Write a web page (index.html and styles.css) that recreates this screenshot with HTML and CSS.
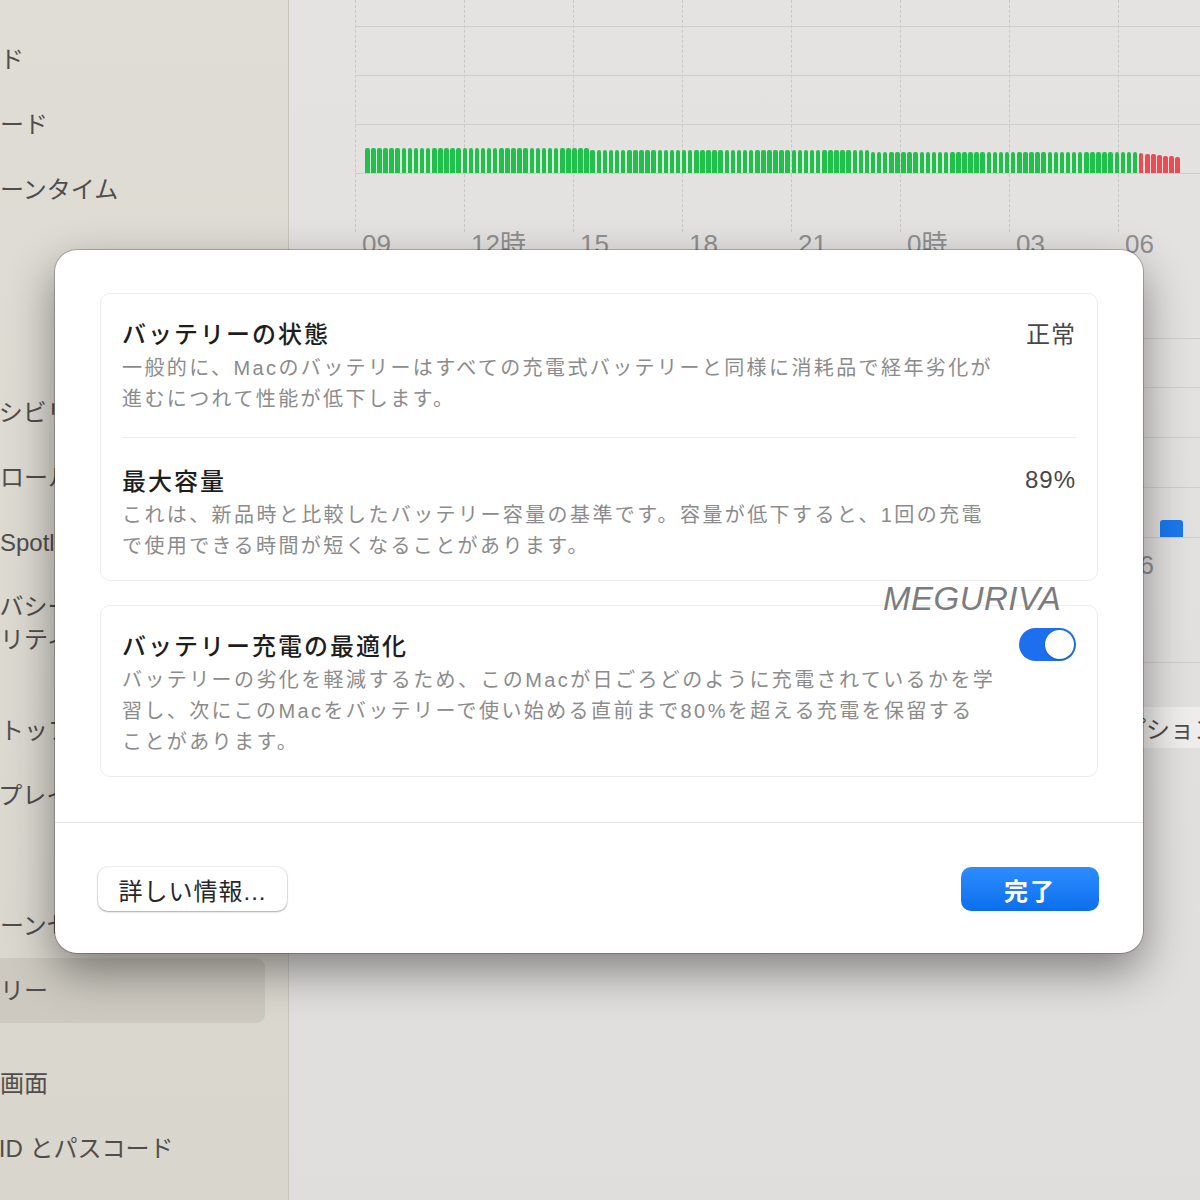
FILE: index.html
```html
<!DOCTYPE html>
<html lang="ja">
<head>
    <meta charset="UTF-8">
    <meta name="viewport" content="width=device-width, initial-scale=1.0">
    <title>バッテリー</title>
    <link rel="stylesheet" href="styles.css">
</head>
<body>
    <div class="window">
        <div class="sidebar">
            <ul class="nav">
                <li>サウンド</li>
                <li>集中モード</li>
                <li>スクリーンタイム</li>
                <li class="gap">一般</li>
                <li>外観</li>
                <li>アクセシビリティ</li>
                <li>コントロールセンター</li>
                <li>Siri と Spotlight</li>
                <li class="two">プライバシーと<br>セキュリティ</li>
                <li class="gap">デスクトップとDock</li>
                <li>ディスプレイ</li>
                <li>壁紙</li>
                <li>スクリーンセーバ</li>
                <li class="active">バッテリー</li>
                <li class="gap">ロック画面</li>
                <li>Touch ID とパスコード</li>
            </ul>
        </div>

        <div class="main">
            <div class="plot">
                <div class="grid">
                    <span></span><span></span><span></span><span></span><span></span>
                    <span></span><span></span><span></span><span></span>
                </div>
                <div class="chart level">
                    <div class="bars" id="level"></div>
                </div>
                <div class="axis">
                    <span>09</span><span>12時</span><span>15</span><span>18</span>
                    <span>21</span><span>0時</span><span>03</span><span>06</span>
                </div>
            </div>

            <div class="plot usage-plot">
                <div class="chart usage">
                    <div class="bars usage-bars">
                        <i class="use" style="margin-left: 795px; height: 17px"></i>
                    </div>
                </div>
                <div class="axis axis-small">
                    <span>09</span><span>12時</span><span>15</span><span>18</span>
                    <span>21</span><span>0時</span><span>03</span><span>06</span>
                </div>
            </div>

            <div class="divider"></div>
            <div class="actions">
                <button class="btn-opt">オプション...</button>
            </div>
        </div>

        <div class="sheet">
            <div class="sheet-body">
                <div class="box">
                    <div class="row">
                        <div class="row-head">
                            <span class="title">バッテリーの状態</span>
                            <span class="value">正常</span>
                        </div>
                        <p class="desc">一般的に、Macのバッテリーはすべての充電式バッテリーと同様に消耗品で経年劣化が<br>進むにつれて性能が低下します。</p>
                    </div>
                    <div class="sep"></div>
                    <div class="row row-next">
                        <div class="row-head">
                            <span class="title">最大容量</span>
                            <span class="value">89%</span>
                        </div>
                        <p class="desc">これは、新品時と比較したバッテリー容量の基準です。容量が低下すると、1回の充電<br>で使用できる時間が短くなることがあります。</p>
                    </div>
                </div>

                <div class="box">
                    <div class="row row-last">
                        <div class="row-head">
                            <span class="title">バッテリー充電の最適化</span>
                            <span class="switch on"></span>
                        </div>
                        <p class="desc">バッテリーの劣化を軽減するため、このMacが日ごろどのように充電されているかを学<br>習し、次にこのMacをバッテリーで使い始める直前まで80%を超える充電を保留する<br>ことがあります。</p>
                    </div>
                </div>
            </div>

            <div class="sheet-sep"></div>

            <div class="sheet-footer">
                <button class="btn btn-more">詳しい情報...</button>
                <button class="btn btn-done">完了</button>
            </div>
        </div>

        <div class="mark">MEGURIVA</div>
    </div>

    <script>
        let level = document.getElementById('level'),
            red = [20, 19.5, 19, 18, 17.5, 17, 16]

        for (let i = 0; i < 127; i++) {
            let h = i < 37 ? 25 : i < 83 ? 23 : 21
            let bar = document.createElement('i')
            bar.style.height = h + 'px'
            level.appendChild(bar)
        }

        red.forEach(function (h) {
            let bar = document.createElement('i')
            bar.className = 'low'
            bar.style.height = h + 'px'
            level.appendChild(bar)
        })
    </script>
</body>
</html>
```

FILE: styles.css
```css
* {
    margin: 0;
    padding: 0;
    box-sizing: border-box;
}
body {
    width: 1200px;
    height: 1200px;
    overflow: hidden;
    font-family: "Liberation Sans", "Noto Sans CJK JP", sans-serif;
    background: #e3e1e0;
}
.window {
    position: relative;
    display: flex;
    height: 1200px;
}

/* sidebar */
.sidebar {
    width: 289px;
    flex: none;
    overflow: hidden;
    padding-top: 27px;
    background: linear-gradient(#dfddd5, #d9d6cd);
    border-right: 1px solid #c8c5bd;
}
.nav {
    list-style: none;
    margin-left: -100px;
    width: 365px;
}
.nav li {
    height: 65px;
    line-height: 65px;
    padding-left: 28px;
    font-size: 24px;
    color: #4f4e4c;
    white-space: nowrap;
    border-radius: 9px;
}
.nav li.gap {
    margin-top: 28px;
}
.nav li.two {
    height: 95px;
    line-height: 33px;
    padding-top: 15px;
}
.nav li.active {
    background: #cdc9c0;
}

/* main pane */
.main {
    flex: 1;
    overflow: hidden;
    padding-left: 66px;
    background: linear-gradient(#e5e3e2, #e0dedd);
}
.plot {
    position: relative;
    width: 1000px;
}
.grid {
    position: absolute;
    left: 0;
    top: 0;
    height: 232px;
    display: flex;
}
.grid span {
    flex: none;
    width: 109px;
    height: 100%;
    border-left: 1px dashed #c9c7c6;
}
.chart {
    position: relative;
    display: flex;
    align-items: flex-end;
    padding-left: 10px;
    border-bottom: 1px solid #cfcdcc;
}
.level {
    height: 174px;
    background: repeating-linear-gradient(to bottom, transparent 0 26px, #cfcdcc 26px 27px, transparent 27px 49px);
}
.bars {
    display: flex;
    align-items: flex-end;
    gap: 1.6px;
    width: 815px;
    height: 100%;
}
.bars i {
    flex: 1;
    background: #20c14b;
    border-radius: 2px 2px 0 0;
}
.bars i.low {
    background: #ec4b51;
}
.axis {
    display: flex;
    margin-top: 55px;
}
.axis span {
    flex: none;
    width: 109px;
    padding-left: 7px;
    font-size: 26px;
    line-height: 30px;
    color: #8f8f8f;
}
.usage-plot {
    margin-top: 30px;
}
.usage {
    height: 249px;
    background: repeating-linear-gradient(to bottom, transparent 0 48.7px, #cfcdcc 48.7px 49.7px, transparent 49.7px 49.8px);
}
.usage-bars i.use {
    flex: none;
    width: 23px;
    background: #1a78ee;
    border-radius: 3px 3px 0 0;
}
.axis-small {
    margin-top: 12px;
}
.divider {
    height: 1px;
    margin-top: 82px;
    background: #cfcdcc;
}
.actions {
    display: flex;
    margin-top: 44px;
    padding-left: 727px;
}
.btn-opt {
    height: 41px;
    padding: 0 16px;
    border: none;
    border-radius: 8px;
    background: #eeedec;
    font-family: inherit;
    font-size: 24px;
    color: #4c4c4c;
    white-space: nowrap;
}

/* sheet */
.sheet {
    position: absolute;
    left: 55px;
    top: 250px;
    width: 1088px;
    height: 703px;
    background: #fff;
    border-radius: 22px;
    box-shadow: 0 0 0 1px rgba(0, 0, 0, 0.22), 0 18px 45px rgba(0, 0, 0, 0.42);
    display: flex;
    flex-direction: column;
}
.sheet-body {
    display: flex;
    flex-direction: column;
    gap: 24px;
    padding: 43px 45px 0;
}
.box {
    border: 1px solid #ececec;
    border-radius: 10px;
}
.row {
    padding: 22px 21px 22px;
}
.row-next,
.row-last {
    padding-bottom: 18px;
}
.row-next {
    padding-top: 25px;
}
.sep {
    height: 1px;
    margin: 0 21px;
    background: #ececec;
}
.row-head {
    display: flex;
    justify-content: space-between;
    align-items: center;
    height: 33px;
}
.title {
    font-size: 24px;
    font-weight: 500;
    letter-spacing: 2px;
    color: #1d1d1d;
}
.value {
    font-size: 24px;
    letter-spacing: 1px;
    color: #474747;
}
.desc {
    margin-top: 4px;
    font-size: 20px;
    line-height: 31px;
    letter-spacing: 2.4px;
    color: #8b8b8b;
    white-space: nowrap;
}
.switch {
    position: relative;
    width: 57px;
    height: 33px;
    border-radius: 17px;
    background: #1d6ff0;
}
.switch::after {
    content: "";
    position: absolute;
    right: 2px;
    top: 2px;
    width: 29px;
    height: 29px;
    border-radius: 50%;
    background: #fff;
    box-shadow: 0 1px 2px rgba(0, 0, 0, 0.25);
}
.sheet-sep {
    height: 1px;
    margin-top: 45px;
    background: #e6e6e6;
}
.sheet-footer {
    display: flex;
    justify-content: space-between;
    padding: 44px 44px 0 43px;
}
.btn {
    height: 44px;
    border: none;
    border-radius: 10px;
    font-family: inherit;
    font-size: 24px;
    cursor: default;
}
.btn-more {
    width: 189px;
    background: #fff;
    color: #262626;
    letter-spacing: 1px;
    box-shadow: 0 0 0 1px rgba(0, 0, 0, 0.06), 0 1px 2px rgba(0, 0, 0, 0.3);
}
.btn-done {
    width: 138px;
    background: linear-gradient(#2e8cff, #0b6fec);
    color: #fff;
    font-weight: 700;
    letter-spacing: 2px;
}

.mark {
    position: absolute;
    left: 883px;
    top: 580px;
    font-size: 33px;
    letter-spacing: 0.5px;
    font-style: italic;
    color: #7c7c7c;
    text-shadow: 0 0 2px #fff;
}
```
